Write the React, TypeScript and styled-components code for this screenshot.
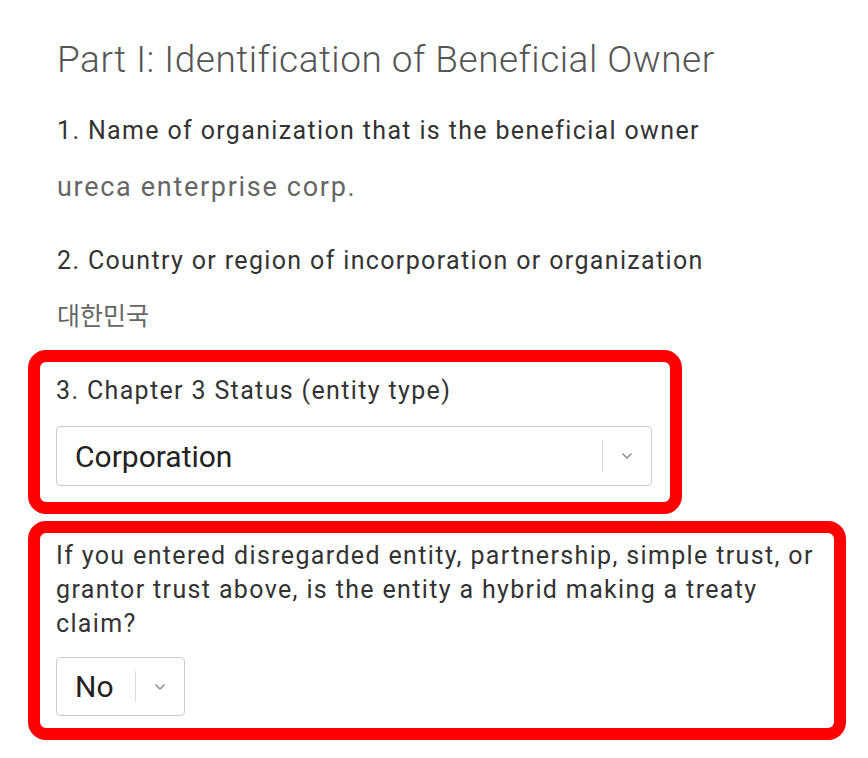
import React from "react";
import styled, { createGlobalStyle } from "styled-components";

const GlobalStyle = createGlobalStyle`
  html, body {
    margin: 0;
    padding: 0;
    background: #ffffff;
  }
  body {
    font-family: Roboto, "Noto Sans CJK KR", "Liberation Sans", sans-serif;
  }
`;

const Page = styled.div`
  width: 868px;
  height: 758px;
  box-sizing: border-box;
  padding: 38px 0 0 28px;
  overflow: hidden;
`;

const Title = styled.h2`
  margin: 0 0 32px 29px;
  font-size: 37px;
  line-height: 44px;
  font-weight: 300;
  letter-spacing: 0.5px;
  color: #555555;
`;

const Field = styled.div<{ $gap: number }>`
  padding-left: 29px;
  margin-bottom: ${(p) => p.$gap}px;
`;

const Label = styled.div`
  font-size: 25px;
  line-height: 34px;
  font-weight: 400;
  letter-spacing: 1.35px;
  color: #333333;
`;

const Value = styled.div<{ $cjk?: boolean }>`
  margin-top: 22px;
  font-size: ${(p) => (p.$cjk ? "25px" : "27px")};
  line-height: 34px;
  font-weight: 400;
  letter-spacing: ${(p) => (p.$cjk ? "0" : "1.7px")};
  color: #666666;
`;

const Highlight = styled.div<{ $width: number; $pad: string }>`
  width: ${(p) => p.$width}px;
  box-sizing: border-box;
  border: 12px solid #ff0000;
  border-radius: 18px;
  padding: ${(p) => p.$pad};
  margin-bottom: 7px;
`;

const Question = styled(Label)<{ $gap: number }>`
  margin-bottom: ${(p) => p.$gap}px;
`;

const SelectBox = styled.div<{ $width: number; $height: number }>`
  width: ${(p) => p.$width}px;
  height: ${(p) => p.$height}px;
  box-sizing: border-box;
  border: 1px solid #cccccc;
  border-radius: 4px;
  display: flex;
  align-items: center;
  background: #ffffff;
`;

const SelectValue = styled.div`
  flex: 1;
  padding-left: 18px;
  font-size: 30px;
  color: #222222;
  white-space: nowrap;
`;

const Separator = styled.span`
  width: 1px;
  align-self: stretch;
  margin: 13px 0;
  background: #dddddd;
`;

const Arrow = styled.div`
  width: 48px;
  display: flex;
  align-items: center;
  justify-content: center;
  color: #888888;
`;

function Chevron() {
  return (
    <svg width="12" height="8" viewBox="0 0 12 8" fill="none">
      <path d="M1.5 1.5 L6 6 L10.5 1.5" stroke="currentColor" strokeWidth="1.4" />
    </svg>
  );
}

function Select({ value, width, height }: { value: string; width: number; height: number }) {
  return (
    <SelectBox $width={width} $height={height}>
      <SelectValue>{value}</SelectValue>
      <Separator />
      <Arrow>
        <Chevron />
      </Arrow>
    </SelectBox>
  );
}

export default function App() {
  return (
    <>
      <GlobalStyle />
      <Page>
        <Title>Part I: Identification of Beneficial Owner</Title>
        <Field $gap={40}>
          <Label>1. Name of organization that is the beneficial owner</Label>
          <Value>ureca enterprise corp.</Value>
        </Field>
        <Field $gap={16}>
          <Label>2. Country or region of incorporation or organization</Label>
          <Value $cjk>대한민국</Value>
        </Field>
        <Highlight $width={654} $pad="12px 17px 16px 16px">
          <Question $gap={18}>3. Chapter 3 Status (entity type)</Question>
          <Select value="Corporation" width={596} height={60} />
        </Highlight>
        <Highlight $width={818} $pad="6px 6px 12px 16px">
          <Question $gap={16}>
            If you entered disregarded entity, partnership, simple trust, or
            grantor trust above, is the entity a hybrid making a treaty claim?
          </Question>
          <Select value="No" width={129} height={59} />
        </Highlight>
      </Page>
    </>
  );
}
